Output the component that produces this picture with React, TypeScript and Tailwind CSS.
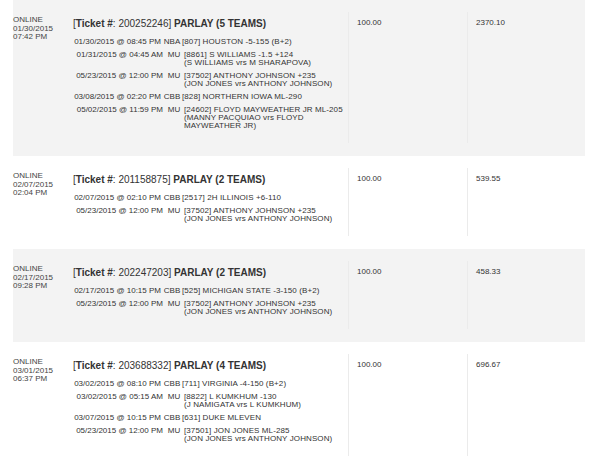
import React from 'react'

type Leg = { when: string; sport: string; lines: string[] }
type Ticket = {
  placed: string[]
  id: string
  kind: string
  risk: string
  win: string
  legs: Leg[]
}

const jj = '(JON JONES vrs ANTHONY JOHNSON)'

const tickets: Ticket[] = [
  {
    placed: ['ONLINE', '01/30/2015', '07:42 PM'],
    id: '200252246',
    kind: 'PARLAY (5 TEAMS)',
    risk: '100.00',
    win: '2370.10',
    legs: [
      { when: '01/30/2015 @ 08:45 PM', sport: 'NBA', lines: ['[807] HOUSTON -5-155 (B+2)'] },
      { when: '01/31/2015 @ 04:45 AM', sport: 'MU', lines: ['[8861] S WILLIAMS -1.5 +124', '(S WILLIAMS vrs M SHARAPOVA)'] },
      { when: '05/23/2015 @ 12:00 PM', sport: 'MU', lines: ['[37502] ANTHONY JOHNSON +235', jj] },
      { when: '03/08/2015 @ 02:20 PM', sport: 'CBB', lines: ['[828] NORTHERN IOWA ML-290'] },
      {
        when: '05/02/2015 @ 11:59 PM',
        sport: 'MU',
        lines: ['[24602] FLOYD MAYWEATHER JR ML-205', '(MANNY PACQUIAO vrs FLOYD', 'MAYWEATHER JR)'],
      },
    ],
  },
  {
    placed: ['ONLINE', '02/07/2015', '02:04 PM'],
    id: '201158875',
    kind: 'PARLAY (2 TEAMS)',
    risk: '100.00',
    win: '539.55',
    legs: [
      { when: '02/07/2015 @ 02:10 PM', sport: 'CBB', lines: ['[2517] 2H ILLINOIS +6-110'] },
      { when: '05/23/2015 @ 12:00 PM', sport: 'MU', lines: ['[37502] ANTHONY JOHNSON +235', jj] },
    ],
  },
  {
    placed: ['ONLINE', '02/17/2015', '09:28 PM'],
    id: '202247203',
    kind: 'PARLAY (2 TEAMS)',
    risk: '100.00',
    win: '458.33',
    legs: [
      { when: '02/17/2015 @ 10:15 PM', sport: 'CBB', lines: ['[525] MICHIGAN STATE -3-150 (B+2)'] },
      { when: '05/23/2015 @ 12:00 PM', sport: 'MU', lines: ['[37502] ANTHONY JOHNSON +235', jj] },
    ],
  },
  {
    placed: ['ONLINE', '03/01/2015', '06:37 PM'],
    id: '203688332',
    kind: 'PARLAY (4 TEAMS)',
    risk: '100.00',
    win: '696.67',
    legs: [
      { when: '03/02/2015 @ 08:10 PM', sport: 'CBB', lines: ['[711] VIRGINIA -4-150 (B+2)'] },
      { when: '03/02/2015 @ 05:15 AM', sport: 'MU', lines: ['[8822] L KUMKHUM -130', '(J NAMIGATA vrs L KUMKHUM)'] },
      { when: '03/07/2015 @ 10:15 PM', sport: 'CBB', lines: ['[631] DUKE MLEVEN'] },
      { when: '05/23/2015 @ 12:00 PM', sport: 'MU', lines: ['[37501] JON JONES ML-285', jj] },
    ],
  },
]

function LegRow({ leg }: { leg: Leg }) {
  return (
    <div className={`flex py-[2.5px] text-[8px] leading-[8px] ${leg.sport === 'MU' ? 'pl-[2px]' : ''}`}>
      <div className="w-[89px] shrink-0 pr-[1px] text-right whitespace-nowrap">{leg.when}</div>
      <div className="w-[20px] shrink-0 text-center">{leg.sport}</div>
      <div className="whitespace-nowrap tracking-[0.1px]">
        {leg.lines.map((l, i) => (
          <div key={i}>{l}</div>
        ))}
      </div>
    </div>
  )
}

export default function App() {
  return (
    <div className="w-[600px] h-[459px] overflow-hidden bg-white font-['Liberation_Sans',Arial,sans-serif] text-[#333]">
      <div className="ml-[13px] w-[572px]">
        {tickets.map((t, i) => (
          <div key={t.id} className={`flex pt-[12px] pb-[13px] ${i % 2 === 0 ? 'bg-[#f3f3f3]' : 'bg-white'}`}>
            {/* placed */}
            <div className="w-[60px] shrink-0 pt-[4px] text-[8px] leading-[8.5px] text-[#444]">
              {t.placed.map((p) => (
                <div key={p}>{p}</div>
              ))}
            </div>

            {/* description */}
            <div className="w-[275px] shrink-0 pt-[6px] pb-[11px]">
              <div className="text-[10px] leading-[12px] whitespace-nowrap mb-[5px]">
                [<b>Ticket #</b>: {t.id}] <b>{t.kind}</b>
              </div>
              {t.legs.map((leg, j) => (
                <LegRow key={j} leg={leg} />
              ))}
            </div>

            {/* risk / win */}
            <div className="w-[119px] shrink-0 border-l border-[#ebebeb] pl-[8px] pt-[7px] text-[8px] leading-[8px]">
              {t.risk}
            </div>
            <div className="w-[118px] shrink-0 border-l border-[#ebebeb] pl-[8px] pt-[7px] text-[8px] leading-[8px]">
              {t.win}
            </div>
          </div>
        ))}
      </div>
    </div>
  )
}
